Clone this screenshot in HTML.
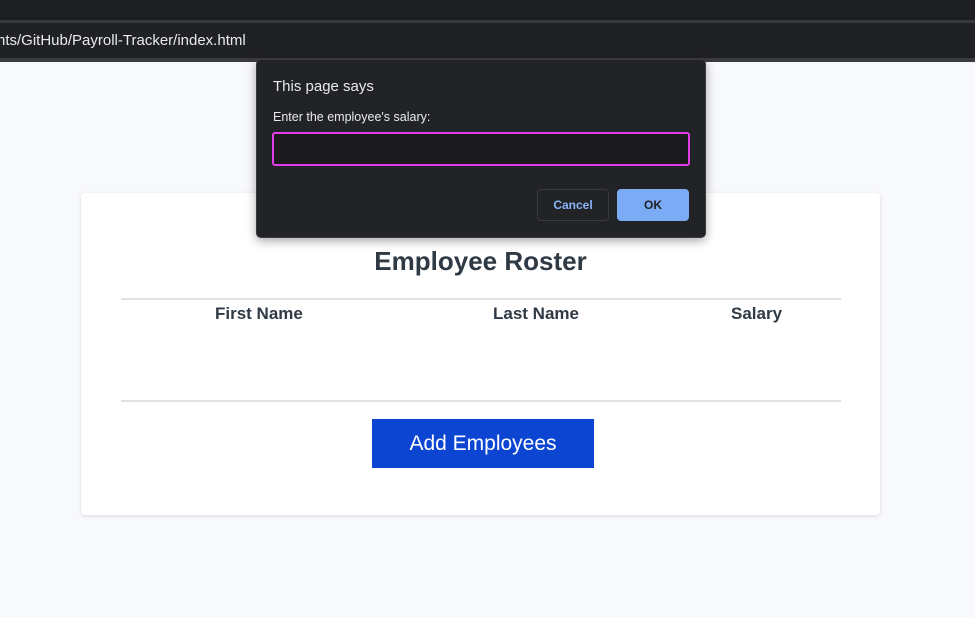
<!DOCTYPE html>
<html><head><style>
*{margin:0;padding:0;box-sizing:border-box}
body{width:975px;height:617px;overflow:hidden;background:#f8f9fc;font-family:"Liberation Sans",Helvetica,Arial,sans-serif;position:relative}
.top{position:absolute;left:0;top:0;width:975px;height:20px;background:#1d1e21}
.sep{position:absolute;left:0;top:20px;width:975px;height:3px;background:#38393d}
.url{position:absolute;left:0;top:23px;width:975px;height:36px;background:#202124;color:#e8eaed;font-size:15px;line-height:36px;padding-left:0}
.url span{position:absolute;left:-3px;top:0}
.sep2{position:absolute;left:0;top:58px;width:975px;height:4px;background:#3a3b3f}
.card{position:absolute;left:81px;top:193px;width:799px;height:322px;background:#fff;border-radius:4px;box-shadow:0 1px 4px rgba(0,0,0,.12)}
h1{position:absolute;left:0;width:799px;top:53px;text-align:center;font-size:26px;color:#2f3a44;font-weight:bold}
.hr1{position:absolute;left:40px;width:720px;top:105px;height:2px;background:#e2e2e2}
.hr2{position:absolute;left:40px;width:720px;top:207px;height:2px;background:#e2e2e2}
.th{position:absolute;top:111px;font-size:17px;font-weight:bold;color:#2f3a44}
.btn{position:absolute;left:291px;top:226px;width:222px;height:49px;background:#0b45d1;color:#fff;font-size:21px;text-align:center;line-height:49px}
.dlg{position:absolute;left:256px;top:59px;width:450px;height:179px;background:#222327;border:1px solid #3a3b3f;border-radius:5px;box-shadow:0 3px 10px rgba(0,0,0,.35);color:#e8eaed}
.t1{position:absolute;left:16px;top:18px;font-size:15px}
.t2{position:absolute;left:16px;top:50px;font-size:12.5px}
.inp{position:absolute;left:15px;top:72px;width:418px;height:34px;border:2px solid #e23ce8;border-radius:3px;background:#1b1b1e}
.cancel{position:absolute;left:280px;top:129px;width:72px;height:32px;border:1px solid #3a3b3f;border-radius:4px;color:#8ab4f8;font-size:12px;font-weight:bold;text-align:center;line-height:30px}
.ok{position:absolute;left:360px;top:129px;width:72px;height:32px;background:#7babf5;border-radius:4px;color:#202124;font-size:12px;font-weight:bold;text-align:center;line-height:32px}
</style></head><body>
<div class="top"></div><div class="sep"></div>
<div class="url"><span>nts/GitHub/Payroll-Tracker/index.html</span></div>
<div class="sep2"></div>
<div class="card">
<h1>Employee Roster</h1>
<div class="hr1"></div>
<div class="th" style="left:134px">First Name</div>
<div class="th" style="left:412px">Last Name</div>
<div class="th" style="left:650px">Salary</div>
<div class="hr2"></div>
<div class="btn">Add Employees</div>
</div>
<div class="dlg">
<div class="t1">This page says</div>
<div class="t2">Enter the employee's salary:</div>
<div class="inp"></div>
<div class="cancel">Cancel</div>
<div class="ok">OK</div>
</div>
</body></html>
